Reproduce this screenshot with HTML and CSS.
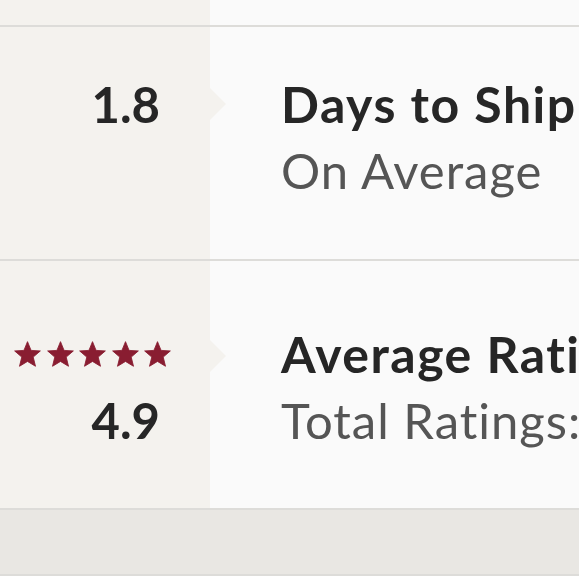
FILE: index.html
```html
<!DOCTYPE html>
<html>
<head>
<meta charset="utf-8">
<link rel="stylesheet" href="styles.css">
</head>
<body>
<div class="page">
  <div class="row row-top">
    <div class="left"></div>
    <div class="right"></div>
  </div>
  <div class="row row-ship">
    <div class="left">
      <div class="arrow"></div>
      <div class="num">1.8</div>
    </div>
    <div class="right">
      <div class="title">Days to Ship</div>
      <div class="sub">On Average</div>
    </div>
  </div>
  <div class="row row-rating">
    <div class="left">
      <div class="arrow"></div>
      <div class="stars">
        <svg viewBox="0 0 25 25" class="star"><path d="M12.5 0.6L15.8 8.7 24.4 9.2 17.8 14.9 19.9 23.4 12.5 18.9 5.1 23.4 7.2 14.9 0.6 9.2 9.2 8.7Z"/></svg>
        <svg viewBox="0 0 25 25" class="star"><path d="M12.5 0.6L15.8 8.7 24.4 9.2 17.8 14.9 19.9 23.4 12.5 18.9 5.1 23.4 7.2 14.9 0.6 9.2 9.2 8.7Z"/></svg>
        <svg viewBox="0 0 25 25" class="star"><path d="M12.5 0.6L15.8 8.7 24.4 9.2 17.8 14.9 19.9 23.4 12.5 18.9 5.1 23.4 7.2 14.9 0.6 9.2 9.2 8.7Z"/></svg>
        <svg viewBox="0 0 25 25" class="star"><path d="M12.5 0.6L15.8 8.7 24.4 9.2 17.8 14.9 19.9 23.4 12.5 18.9 5.1 23.4 7.2 14.9 0.6 9.2 9.2 8.7Z"/></svg>
        <svg viewBox="0 0 25 25" class="star"><path d="M12.5 0.6L15.8 8.7 24.4 9.2 17.8 14.9 19.9 23.4 12.5 18.9 5.1 23.4 7.2 14.9 0.6 9.2 9.2 8.7Z"/></svg>
      </div>
      <div class="num">4.9</div>
    </div>
    <div class="right">
      <div class="title">Average Rating</div>
      <div class="sub">Total Ratings: 1,204</div>
    </div>
  </div>
  <div class="band"></div>
</div>
</body>
</html>
```

FILE: styles.css
```css
html, body {
  margin: 0;
  padding: 0;
  background: #ffffff;
}
.page {
  width: 579px;
  height: 580px;
  overflow: hidden;
  font-family: "Lato", "Liberation Sans", sans-serif;
}
.row {
  display: flex;
  border-bottom: 2px solid #dddcd9;
}
.left {
  position: relative;
  width: 210px;
  flex: none;
  background: #f4f2ee;
  display: flex;
  flex-direction: column;
  align-items: flex-end;
  padding-right: 50px;
  box-sizing: border-box;
}
.right {
  flex: 1;
  min-width: 0;
  background: #fafafa;
  padding-left: 71px;
  white-space: nowrap;
  overflow: hidden;
}
.row-top {
  height: 25px;
}
.row-ship .left,
.row-ship .right {
  padding-top: 44px;
  padding-bottom: 56px;
}
.row-rating .left,
.row-rating .right {
  padding-top: 60px;
  padding-bottom: 55px;
}
.title, .sub, .num {
  font-size: 49px;
  line-height: 66px;
}
.title, .num {
  font-weight: 700;
  color: #262626;
}
.title {
  font-size: 50px;
  letter-spacing: 1.5px;
}
.sub {
  font-weight: 400;
  color: #555555;
  letter-spacing: 1px;
}
.arrow {
  position: absolute;
  right: -16px;
  width: 0;
  height: 0;
  border-top: 16px solid transparent;
  border-bottom: 16px solid transparent;
  border-left: 16px solid #f4f2ee;
}
.row-ship .arrow { top: 61px; }
.row-rating .arrow { top: 79px; }
.stars {
  height: 66px;
  display: flex;
  align-items: center;
  gap: 5.4px;
  margin-right: -11px;
}
.star {
  width: 27px;
  height: 27px;
  fill: #891d31;
  stroke: #891d31;
  stroke-width: 0.8;
  stroke-linejoin: round;
}
.band {
  height: 64px;
  background: #e9e7e3;
  border-bottom: 2px solid #dddcd9;
}
```
